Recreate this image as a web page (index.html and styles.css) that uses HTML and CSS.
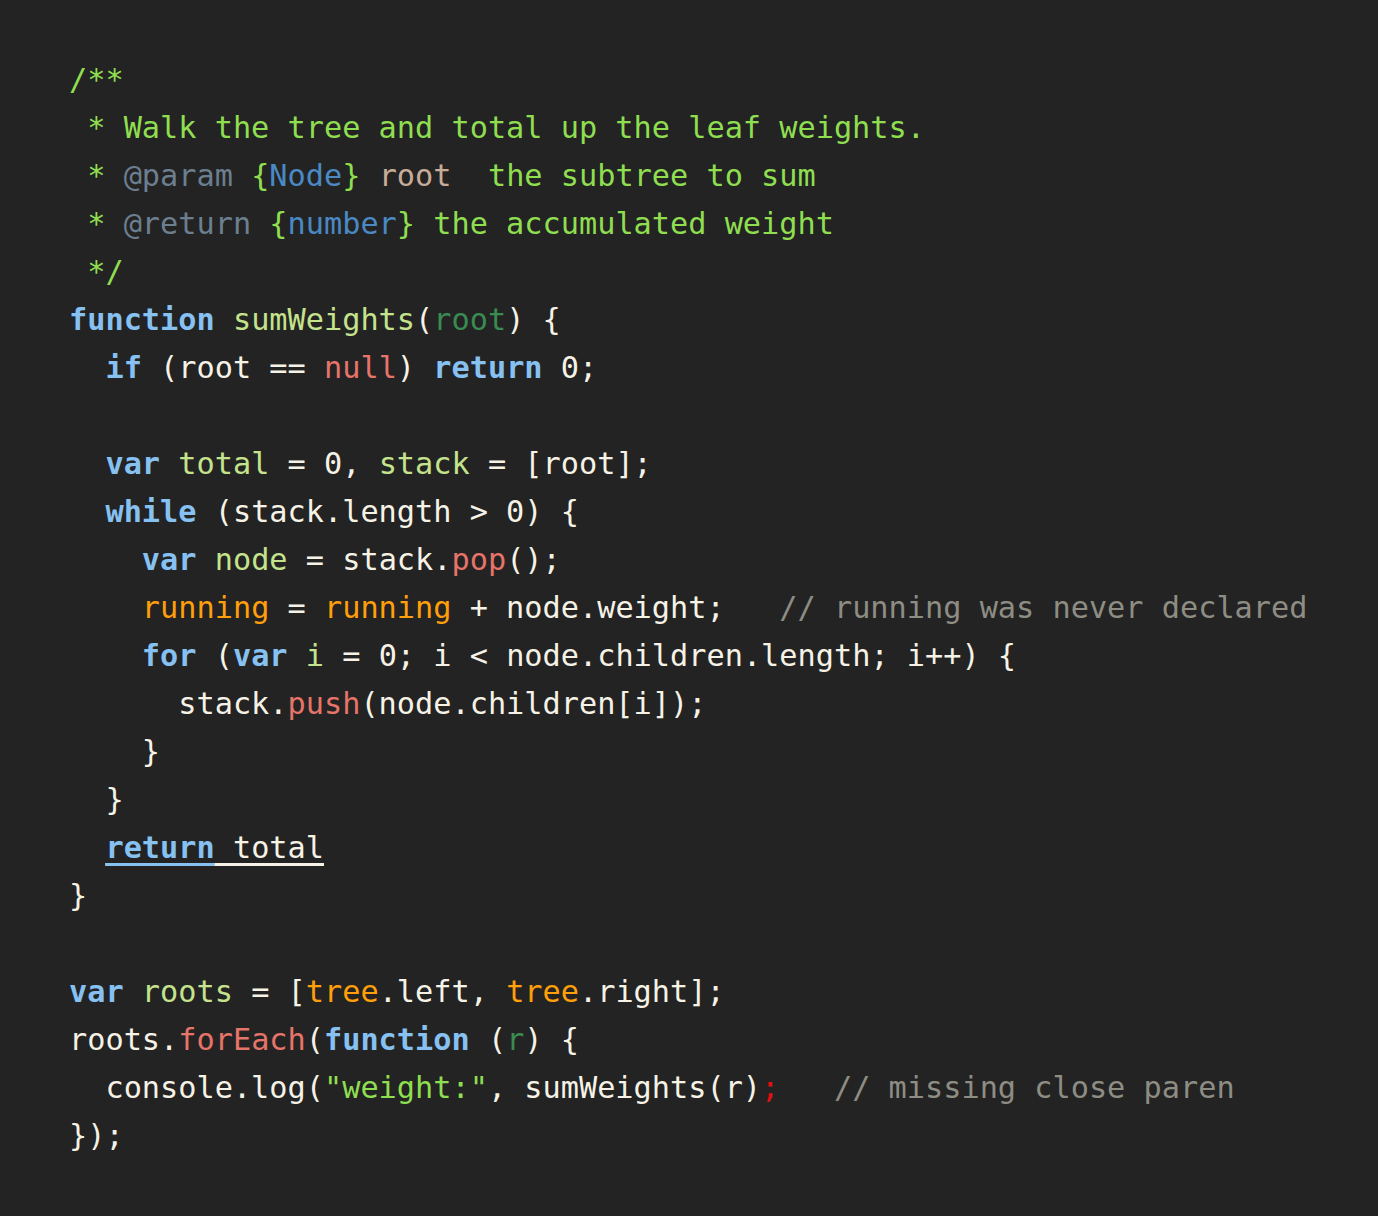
FILE: index.html
```html
<!DOCTYPE html>
<html>
<head>
<meta charset="utf-8">
<link rel="stylesheet" href="styles.css">
</head>
<body>
<pre class="code"><span class="cm">/**
 * Walk the tree and total up the leaf weights.
 * <span class="tag">@param</span> {<span class="ty">Node</span>} <span class="pn">root</span>  the subtree to sum
 * <span class="tag">@return</span> {<span class="ty">number</span>} the accumulated weight
 */</span>
<span class="kw">function</span> <span class="def">sumWeights</span>(<span class="par">root</span>) {
  <span class="kw">if</span> (root == <span class="lit">null</span>) <span class="kw">return</span> 0;

  <span class="kw">var</span> <span class="def">total</span> = 0, <span class="def">stack</span> = [root];
  <span class="kw">while</span> (stack.length &gt; 0) {
    <span class="kw">var</span> <span class="def">node</span> = stack.<span class="lit">pop</span>();
    <span class="glb">running</span> = <span class="glb">running</span> + node.weight;   <span class="cc">// running was never declared</span>
    <span class="kw">for</span> (<span class="kw">var</span> <span class="def">i</span> = 0; i &lt; node.children.length; i++) {
      stack.<span class="lit">push</span>(node.children[i]);
    }
  }
  <span class="err"><span class="kw">return</span> total</span>
}

<span class="kw">var</span> <span class="def">roots</span> = [<span class="glb">tree</span>.left, <span class="glb">tree</span>.right];
roots.<span class="lit">forEach</span>(<span class="kw">function</span> (<span class="par">r</span>) {
  console.log(<span class="str">"weight:"</span>, sumWeights(r)<span class="bad">;</span>   <span class="cc">// missing close paren</span>
});</pre>
</body>
</html>
```
FILE: styles.css
```css
html, body {
  margin: 0;
  padding: 0;
  background: #232323;
}
body {
  width: 1378px;
  height: 1216px;
  overflow: hidden;
}
.code {
  margin: 0;
  padding: 56px 0 0 69px;
  font-family: "DejaVu Sans Mono", "Liberation Mono", monospace;
  font-size: 30.25px;
  line-height: 48px;
  color: #f6f2e6;
  white-space: pre;
}
.cm { color: #8fde50; }
.tag { color: #6c7f90; }
.ty { color: #4a89c4; }
.pn { color: #c9ac98; }
.kw { color: #86c1f2; font-weight: bold; }
.def { color: #c5e38c; }
.par { color: #3a8b52; }
.lit { color: #e77469; }
.glb { color: #ff9f0a; }
.cc { color: #8e8d83; }
.str { color: #8fde50; }
.bad { color: #e01010; }
.err {
  text-decoration: underline;
  text-decoration-thickness: 3px;
  text-underline-offset: 5px;
}
.err .kw {
  text-decoration: underline;
  text-decoration-color: #86c1f2;
  text-decoration-thickness: 3px;
  text-underline-offset: 5px;
}
```
